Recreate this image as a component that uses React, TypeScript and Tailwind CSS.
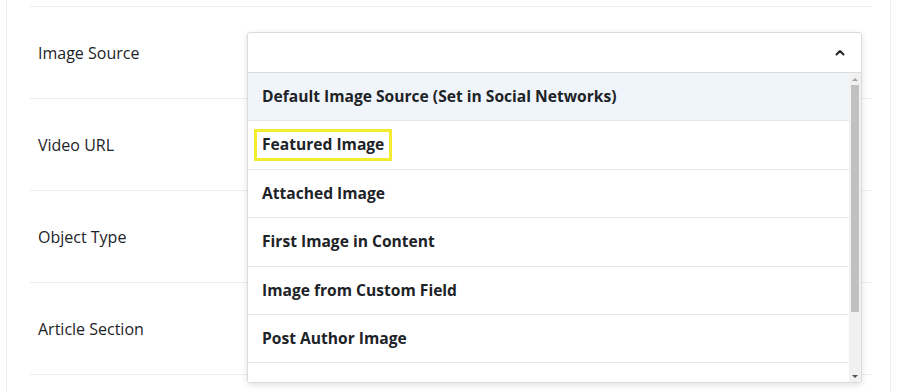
const labels = ["Image Source", "Video URL", "Object Type", "Article Section"];

const options = [
  "Default Image Source (Set in Social Networks)",
  "Featured Image",
  "Attached Image",
  "First Image in Content",
  "Image from Custom Field",
  "Post Author Image",
  "",
];

function Chevron() {
  return (
    <svg width="10" height="7" viewBox="0 0 10 7" fill="none">
      <path d="M1.5 5.5 5 2l3.5 3.5" stroke="#1d2327" strokeWidth="2" strokeLinecap="round" strokeLinejoin="round" />
    </svg>
  );
}

function Dropdown() {
  return (
    <div className="absolute left-[217px] top-[32px] w-[615px] rounded-[3px] border border-[#dcdcde] bg-white shadow-[0_2px_6px_rgba(0,0,0,0.12)]">
      {/* select header */}
      <div className="flex h-[40px] items-center justify-end border-b border-[#dcdcde] pr-[16px]">
        <Chevron />
      </div>
      {/* list */}
      <div className="flex h-[309px] overflow-hidden">
        <div className="flex-1 overflow-hidden">
          {options.map((o, i) => (
            <div
              key={i}
              className={`flex h-[48.4px] shrink-0 items-center border-b border-[#e6e6e6] pl-[14px] text-[15.6px] font-bold text-[#1d2327] ${
                i === 0 ? "bg-[#f0f5fb]" : "bg-white"
              }`}
            >
              {i === 1 ? (
                <span className="-ml-[8px] border-[3px] border-[#f3ec2f] px-[5px] py-[1px]">{o}</span>
              ) : (
                o
              )}
            </div>
          ))}
        </div>
        {/* scrollbar */}
        <div className="flex w-[12px] flex-col items-center bg-[#f1f1f1]">
          <div className="flex h-[12px] items-center justify-center">
            <div className="h-0 w-0 border-x-[3px] border-b-[3px] border-x-transparent border-b-[#a3a3a3]" />
          </div>
          <div className="h-[227px] w-[8px] bg-[#c1c1c1]" />
          <div className="flex-1" />
          <div className="flex h-[12px] items-center justify-center">
            <div className="h-0 w-0 border-x-[3px] border-t-[3px] border-x-transparent border-t-[#505050]" />
          </div>
        </div>
      </div>
    </div>
  );
}

export default function App() {
  return (
    <div className="h-[392px] w-[900px] overflow-hidden bg-white font-['Open_Sans',sans-serif]">
      <div className="ml-[6px] h-full w-[885px] border-x border-[#f0f0f1] pl-[23px] pr-[18px]">
        <div className="relative pt-[6px]">
          {labels.map((l) => (
            <div key={l} className="flex h-[92px] items-center border-t border-[#ececec] pl-[8px] text-[16px] text-[#1d2327]">
              {l}
            </div>
          ))}
          <div className="border-t border-[#ececec]" />
          <Dropdown />
        </div>
      </div>
    </div>
  );
}
